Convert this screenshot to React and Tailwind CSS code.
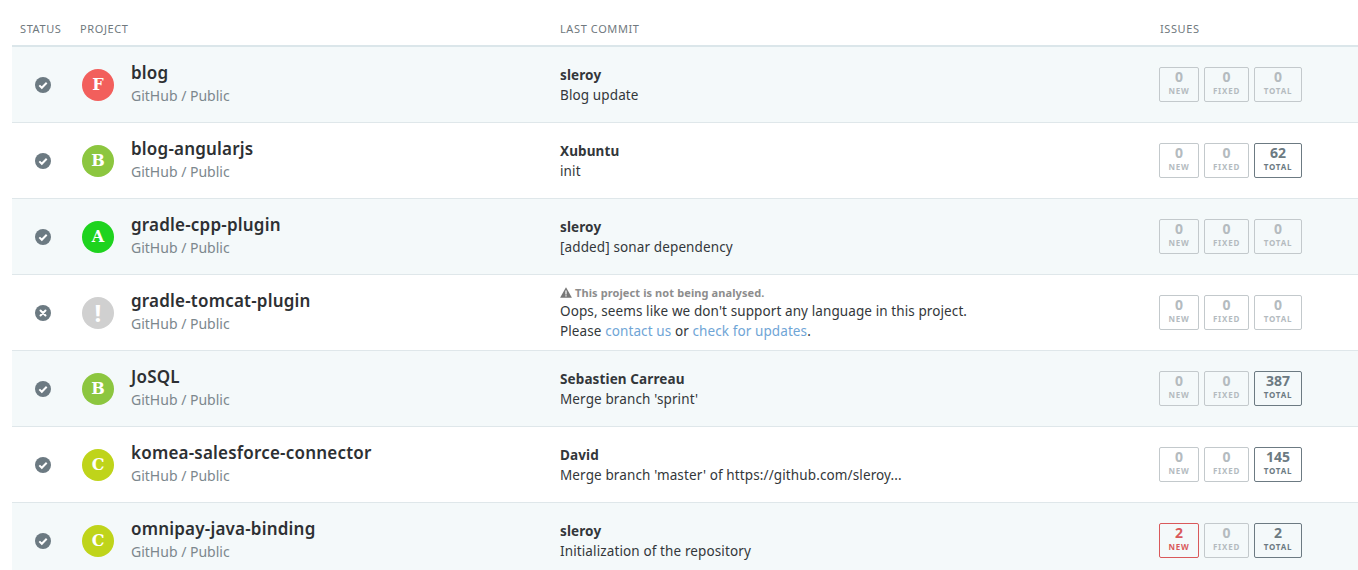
const PROJECTS = [
  { name: "blog", grade: "F", color: "bg-[#f25f5c]", author: "sleroy", message: "Blog update", total: 0 },
  { name: "blog-angularjs", grade: "B", color: "bg-[#8cc63f]", author: "Xubuntu", message: "init", total: 62 },
  { name: "gradle-cpp-plugin", grade: "A", color: "bg-[#1ed31e]", author: "sleroy", message: "[added] sonar dependency", total: 0 },
  { name: "gradle-tomcat-plugin", grade: "!", color: "bg-[#d0d0d0]", failed: true, total: 0 },
  { name: "JoSQL", grade: "B", color: "bg-[#8cc63f]", author: "Sebastien Carreau", message: "Merge branch 'sprint'", total: 387 },
  { name: "komea-salesforce-connector", grade: "C", color: "bg-[#bfd41a]", author: "David", message: "Merge branch 'master' of https://github.com/sleroy...", total: 145 },
  { name: "omnipay-java-binding", grade: "C", color: "bg-[#bfd41a]", author: "sleroy", message: "Initialization of the repository", newIssues: 2, total: 2 },
];

function StatusIcon({ failed }) {
  return (
    <svg width="16" height="16" viewBox="0 0 16 16" className="block">
      <circle cx="8" cy="8" r="8" fill="#6c7a82" />
      {failed ? (
        <path d="M5.5 5.5l5 5M10.5 5.5l-5 5" stroke="#fff" strokeWidth="2" strokeLinecap="round" fill="none" />
      ) : (
        <path d="M4.3 8.4l2.5 2.4 4.9-5" stroke="#fff" strokeWidth="2" fill="none" />
      )}
    </svg>
  );
}

function Warning() {
  return (
    <svg width="12" height="11" viewBox="0 0 12 11" className="mr-[3px] shrink-0">
      <path d="M6 0.2L11.9 10.8H0.1Z" fill="#777" />
      <path d="M5.4 3.6h1.2v3.8H5.4zM5.4 8.2h1.2v1.2H5.4z" fill="#fff" />
    </svg>
  );
}

function IssueBox({ value, label, width, tone }) {
  const tones = {
    off: "border-[#c3c9cc] text-[#b4bbbf]",
    on: "border-[#6c7a82] text-[#6c7a82]",
    bad: "border-[#d9595b] text-[#d9595b]",
  };
  return (
    <div className={`${width} ${tones[tone]} h-[35px] border rounded-[2px] flex flex-col items-center pt-[1px]`}>
      <span className="text-[14px] leading-[15px] font-bold">{value}</span>
      <span className="text-[8px] leading-[13px] font-bold tracking-[0.8px]">{label}</span>
    </div>
  );
}

function Row({ p, odd }) {
  return (
    <div className={`grid grid-cols-[60px_480px_600px_1fr] items-center h-[76px] pl-2 border-b border-[#dfe7ea] ${odd ? "bg-[#f4f9fa]" : "bg-white"}`}>
      <div className="pl-[15px]"><StatusIcon failed={p.failed} /></div>
      <div className="flex items-center pl-[2px]">
        <div className={`${p.color} w-8 h-8 rounded-full flex items-center justify-center text-white font-bold ${p.failed ? "text-[24px] font-['Noto_Sans',sans-serif]" : "text-[16px] font-['DejaVu_Serif',serif]"}`}>
          {p.grade}
        </div>
        <div className="ml-[17px] -mt-[2px]">
          <div className="text-[17px] leading-[24px] font-semibold tracking-[0.2px] text-[#2d3033]">{p.name}</div>
          <div className="text-[14px] leading-[20px] mt-[1px] text-[#7c878d]">GitHub / Public</div>
        </div>
      </div>
      {p.failed ? (
        <div className="text-[13.5px] leading-[20px] text-[#33373a] tracking-[0.1px]">
          <div className="flex items-center text-[11px] leading-[16px] font-bold text-[#8d8d8d]"><Warning />This project is not being analysed.</div>
          <div>Oops, seems like we don't support any language in this project.</div>
          <div>
            Please <a className="text-[#6fa5d6]">contact us</a> or <a className="text-[#6fa5d6]">check for updates</a>.
          </div>
        </div>
      ) : (
        <div className="text-[13.5px] leading-[20px] text-[#33373a] tracking-[0.12px]">
          <div className="font-bold">{p.author}</div>
          <div>{p.message}</div>
        </div>
      )}
      <div className="flex gap-[5px] -ml-[1px]">
        <IssueBox value={p.newIssues || 0} label="NEW" width="w-[40px]" tone={p.newIssues ? "bad" : "off"} />
        <IssueBox value={0} label="FIXED" width="w-[45px]" tone="off" />
        <IssueBox value={p.total} label="TOTAL" width="w-[48px]" tone={p.total ? "on" : "off"} />
      </div>
    </div>
  );
}

export default function App() {
  return (
    <div className="h-[570px] overflow-hidden bg-white pl-3 font-['Noto_Sans',sans-serif]">
      <div className="grid grid-cols-[60px_480px_600px_1fr] h-[47px] pt-[21px] pl-2 border-b-2 border-[#dbe6ea] text-[11px] leading-[16px] tracking-[0.6px] text-[#70797e]">
        <div>STATUS</div>
        <div>PROJECT</div>
        <div>LAST COMMIT</div>
        <div>ISSUES</div>
      </div>
      {PROJECTS.map((p, i) => (
        <Row key={p.name} p={p} odd={i % 2 === 0} />
      ))}
    </div>
  );
}
